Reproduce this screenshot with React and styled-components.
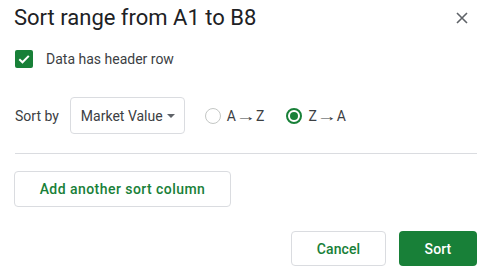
import React from "react";
import styled, { createGlobalStyle } from "styled-components";

const Global = createGlobalStyle`
  html, body { margin: 0; padding: 0; background: #fff; }
  body { font-family: Roboto, "Liberation Sans", Arial, sans-serif; }
  * { box-sizing: border-box; }
`;

const Dialog = styled.div`
  width: 488px;
  height: 272px;
  padding: 0 11px 0 14px;
  display: flex;
  flex-direction: column;
  background: #fff;
`;

const Header = styled.div`
  height: 36px;
  display: flex;
  align-items: center;
  justify-content: space-between;
`;

const Title = styled.h1`
  margin: 0;
  font-size: 22px;
  line-height: 36px;
  font-weight: 400;
  color: #202124;
  font-family: Roboto, "Liberation Sans", sans-serif;
`;

const CloseButton = styled.button`
  border: 0;
  background: none;
  padding: 0;
  margin-right: 9px;
  width: 12px;
  height: 12px;
  display: flex;
  cursor: pointer;
`;

const CheckRow = styled.label`
  margin-top: 14px;
  display: flex;
  align-items: center;
  gap: 13px;
  height: 18px;
  padding-left: 1px;
  font-size: 14px;
  color: #3c4043;
`;

const CheckBox = styled.span`
  width: 18px;
  height: 18px;
  border-radius: 2px;
  background: #188038;
  display: flex;
  align-items: center;
  justify-content: center;
`;

const SortRow = styled.div`
  margin-top: 29px;
  display: flex;
  align-items: center;
  height: 37px;
  padding-left: 1px;
`;

const SortLabel = styled.span`
  font-size: 14px;
  color: #3c4043;
  margin-right: 11px;
`;

const Select = styled.div`
  width: 115px;
  height: 37px;
  border: 1px solid #dadce0;
  border-radius: 4px;
  display: flex;
  align-items: center;
  justify-content: space-between;
  padding: 0 9px 0 10px;
  font-size: 14px;
  color: #3c4043;
`;

const Caret = styled.span`
  width: 0;
  height: 0;
  border-left: 4px solid transparent;
  border-right: 4px solid transparent;
  border-top: 4px solid #5f6368;
`;

const RadioOption = styled.label`
  display: flex;
  align-items: center;
  gap: 6px;
  margin-left: ${(p) => p.$gap}px;
  font-size: 14px;
  color: #3c4043;
`;

const OrderText = styled.span`
  display: flex;
  align-items: center;
`;

const Arrow = styled.span`
  display: inline-block;
  transform: scaleX(1.45);
  margin: 0 3px;
`;

const RadioCircle = styled.span`
  width: 16px;
  height: 16px;
  border-radius: 50%;
  border: ${(p) => (p.$checked ? "2px solid #188038" : "1px solid #c4c7c5")};
  display: flex;
  align-items: center;
  justify-content: center;
  &::after {
    content: "";
    display: ${(p) => (p.$checked ? "block" : "none")};
    width: 8px;
    height: 8px;
    border-radius: 50%;
    background: #188038;
  }
`;

const Divider = styled.hr`
  margin: 19px 0 0 1px;
  border: 0;
  border-top: 1px solid #dadce0;
  height: 0;
`;

const OutlineButton = styled.button`
  height: ${(p) => p.$h}px;
  width: ${(p) => p.$w}px;
  border: 1px solid #dadce0;
  border-radius: 4px;
  background: #fff;
  color: #188038;
  font-family: Roboto, "Liberation Sans", sans-serif;
  font-size: 14px;
  font-weight: 500;
  letter-spacing: ${(p) => p.$ls || 0.1}px;
  padding: 0;
  cursor: pointer;
`;

const AddRow = styled.div`
  margin-top: 17px;
  display: flex;
`;

const Footer = styled.div`
  margin-top: 24px;
  display: flex;
  justify-content: flex-end;
  gap: 13px;
`;

const PrimaryButton = styled.button`
  height: 35px;
  width: 78px;
  border: 0;
  border-radius: 4px;
  background: #188038;
  color: #fff;
  font-family: Roboto, "Liberation Sans", sans-serif;
  font-size: 14px;
  font-weight: 500;
  letter-spacing: 0.1px;
  padding: 0;
  cursor: pointer;
`;

export default function App() {
  return (
    <>
      <Global />
      <Dialog>
        <Header>
          <Title>Sort range from A1 to B8</Title>
          <CloseButton aria-label="Close">
            <svg width="12" height="12" viewBox="0 0 12 12">
              <path d="M1 1L11 11M11 1L1 11" stroke="#5f6368" strokeWidth="1.6" fill="none" />
            </svg>
          </CloseButton>
        </Header>
        <CheckRow>
          <CheckBox>
            <svg width="14" height="14" viewBox="0 0 14 14">
              <path d="M2.3 7.2L5.5 10.3L11.8 3.9" stroke="#fff" strokeWidth="2" fill="none" />
            </svg>
          </CheckBox>
          Data has header row
        </CheckRow>
        <SortRow>
          <SortLabel>Sort by</SortLabel>
          <Select>
            Market Value
            <Caret />
          </Select>
          <RadioOption $gap={20}>
            <RadioCircle />
            <OrderText>A<Arrow>→</Arrow>Z</OrderText>
          </RadioOption>
          <RadioOption $gap={22}>
            <RadioCircle $checked />
            <OrderText>Z<Arrow>→</Arrow>A</OrderText>
          </RadioOption>
        </SortRow>
        <Divider />
        <AddRow>
          <OutlineButton $w={217} $h={36} $ls={0.45}>Add another sort column</OutlineButton>
        </AddRow>
        <Footer>
          <OutlineButton $w={95} $h={35}>Cancel</OutlineButton>
          <PrimaryButton>Sort</PrimaryButton>
        </Footer>
      </Dialog>
    </>
  );
}
